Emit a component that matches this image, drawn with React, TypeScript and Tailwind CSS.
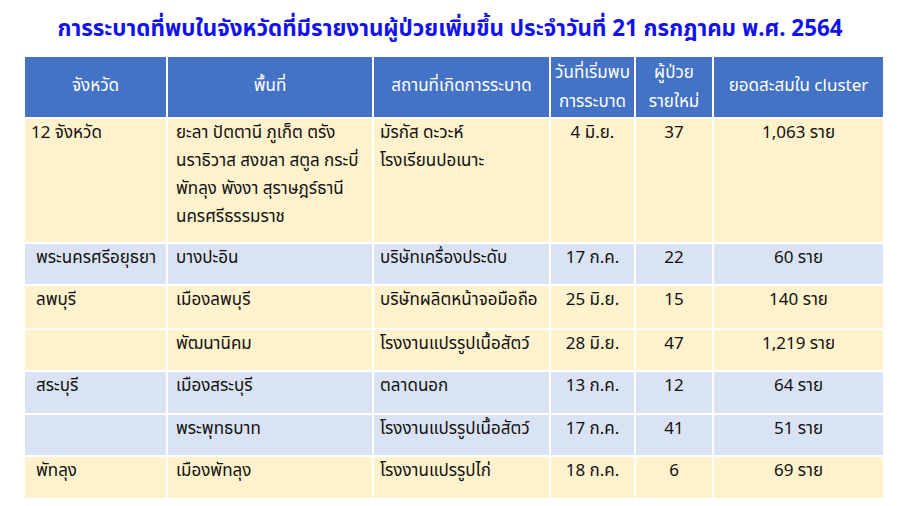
const font = { fontFamily: '"Noto Sans", Tahoma, "Noto Sans Thai", sans-serif' };

type Row = {
  province: string;
  area: string[];
  place: string[];
  date: string;
  cases: string;
  total: string;
  tone: 'y' | 'b';
  indent?: boolean;
  h: string;
};

const rows: Row[] = [
  {
    province: '12 จังหวัด',
    area: ['ยะลา ปัตตานี ภูเก็ต ตรัง', 'นราธิวาส สงขลา สตูล กระบี่', 'พัทลุง พังงา สุราษฎร์ธานี', 'นครศรีธรรมราช'],
    place: ['มัรกัส ดะวะห์', 'โรงเรียนปอเนาะ'],
    date: '4 มิ.ย.',
    cases: '37',
    total: '1,063 ราย',
    tone: 'y',
    h: 'h-[125px]',
  },
  { province: 'พระนครศรีอยุธยา', area: ['บางปะอิน'], place: ['บริษัทเครื่องประดับ'], date: '17 ก.ค.', cases: '22', total: '60 ราย', tone: 'b', indent: true, h: 'h-[42px]' },
  { province: 'ลพบุรี', area: ['เมืองลพบุรี'], place: ['บริษัทผลิตหน้าจอมือถือ'], date: '25 มิ.ย.', cases: '15', total: '140 ราย', tone: 'y', indent: true, h: 'h-[44px]' },
  { province: '', area: ['พัฒนานิคม'], place: ['โรงงานแปรรูปเนื้อสัตว์'], date: '28 มิ.ย.', cases: '47', total: '1,219 ราย', tone: 'y', h: 'h-[42px]' },
  { province: 'สระบุรี', area: ['เมืองสระบุรี'], place: ['ตลาดนอก'], date: '13 ก.ค.', cases: '12', total: '64 ราย', tone: 'b', indent: true, h: 'h-[43px]' },
  { province: '', area: ['พระพุทธบาท'], place: ['โรงงานแปรรูปเนื้อสัตว์'], date: '17 ก.ค.', cases: '41', total: '51 ราย', tone: 'b', h: 'h-[42px]' },
  { province: 'พัทลุง', area: ['เมืองพัทลุง'], place: ['โรงงานแปรรูปไก่'], date: '18 ก.ค.', cases: '6', total: '69 ราย', tone: 'y', indent: true, h: 'h-[43px]' },
];

const cell = 'border-2 border-white align-top whitespace-nowrap';

export default function App() {
  return (
    <div className="w-[900px] h-[506px] bg-white overflow-hidden" style={font}>
      <h1 className="pt-[11px] h-[55px] text-center text-[22.4px] font-bold leading-[34px] text-[#1212ee] whitespace-nowrap">
        การระบาดที่พบในจังหวัดที่มีรายงานผู้ป่วยเพิ่มขึ้น ประจำวันที่ 21 กรกฎาคม พ.ศ. 2564
      </h1>
      <table className="ml-[23px] w-[860px] table-fixed border-collapse text-[17px] leading-[28px] text-[#111]">
        <colgroup>
          <col className="w-[143px]" />
          <col className="w-[206px]" />
          <col className="w-[177px]" />
          <col className="w-[85px]" />
          <col className="w-[78px]" />
          <col className="w-[171px]" />
        </colgroup>
        <thead>
          <tr className="h-[62px] bg-[#4472c4] text-white">
            <th className="border-2 border-white font-normal pb-[4px]">จังหวัด</th>
            <th className="border-2 border-white font-normal pb-[4px]">พื้นที่</th>
            <th className="border-2 border-white font-normal pb-[4px]">สถานที่เกิดการระบาด</th>
            <th className="border-2 border-white font-normal pb-[2px] leading-[29px] whitespace-nowrap">
              วันที่เริ่มพบ
              <br />
              การระบาด
            </th>
            <th className="border-2 border-white font-normal pb-[2px] leading-[29px]">
              ผู้ป่วย
              <br />
              รายใหม่
            </th>
            <th className="border-2 border-white font-normal pb-[4px] whitespace-nowrap">ยอดสะสมใน cluster</th>
          </tr>
        </thead>
        <tbody>
          {rows.map((r, i) => (
            <tr key={i} className={`${r.h} ${r.tone === 'y' ? 'bg-[#fff2cc]' : 'bg-[#dae3f3]'}`}>
              <td className={`${cell} ${r.indent ? 'pl-[11px]' : 'pl-[6px]'}`}>
                <div className="-mt-[1px]">{r.province}</div>
              </td>
              <td className={`${cell} pl-[8px]`}>
                <div className="-mt-[1px]">
                  {r.area.map((a) => (
                    <div key={a}>{a}</div>
                  ))}
                </div>
              </td>
              <td className={`${cell} pl-[6px]`}>
                <div className="-mt-[1px]">
                  {r.place.map((p) => (
                    <div key={p}>{p}</div>
                  ))}
                </div>
              </td>
              <td className={`${cell} text-center`}>
                <div className="-mt-[1px]">{r.date}</div>
              </td>
              <td className={`${cell} text-center`}>
                <div className="-mt-[1px]">{r.cases}</div>
              </td>
              <td className={`${cell} text-center`}>
                <div className="-mt-[1px]">{r.total}</div>
              </td>
            </tr>
          ))}
        </tbody>
      </table>
    </div>
  );
}
